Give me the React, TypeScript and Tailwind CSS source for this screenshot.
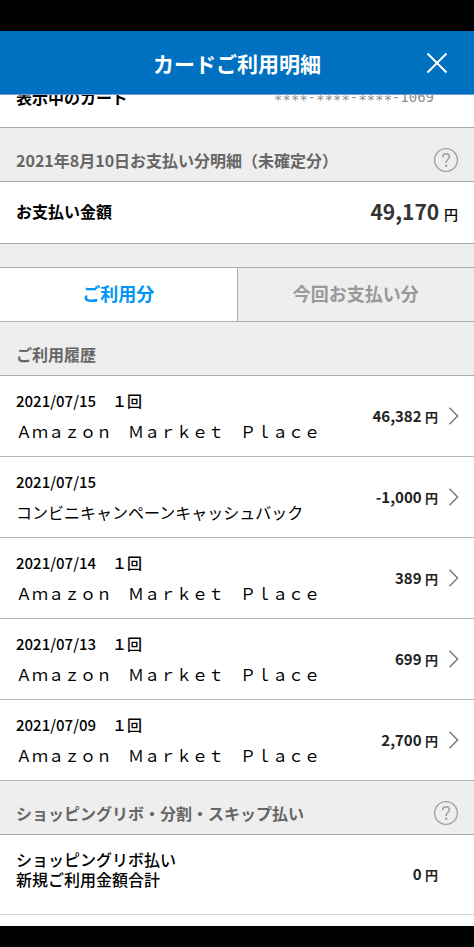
import type { ReactNode } from 'react';

interface Usage {
  date: string;
  count?: string;
  shop: string;
  price: string;
}

const usages: Usage[] = [
  { date: '2021/07/15', count: '１回', shop: 'Ａｍａｚｏｎ　Ｍａｒｋｅｔ　Ｐｌａｃｅ', price: '46,382' },
  { date: '2021/07/15', shop: 'コンビニキャンペーンキャッシュバック', price: '-1,000' },
  { date: '2021/07/14', count: '１回', shop: 'Ａｍａｚｏｎ　Ｍａｒｋｅｔ　Ｐｌａｃｅ', price: '389' },
  { date: '2021/07/13', count: '１回', shop: 'Ａｍａｚｏｎ　Ｍａｒｋｅｔ　Ｐｌａｃｅ', price: '699' },
  { date: '2021/07/09', count: '１回', shop: 'Ａｍａｚｏｎ　Ｍａｒｋｅｔ　Ｐｌａｃｅ', price: '2,700' },
];

const HelpButton = () => (
  <button type="button" aria-label="ヘルプ" className="shrink-0 text-[#a0a0a0]">
    <svg width="26" height="26" viewBox="0 0 26 26" fill="none" stroke="currentColor">
      <circle cx="13" cy="13" r="11.4" strokeWidth="1.3" />
      <path d="M9.7 10.2c0-2.1 1.4-3.4 3.4-3.4s3.3 1.2 3.3 3c0 2.6-3.2 2.8-3.2 5.4v.7" strokeWidth="1.6" />
      <circle cx="13.2" cy="18.7" r="1.2" fill="currentColor" stroke="none" />
    </svg>
  </button>
);

const SectionTitle = ({ children, help }: { children: ReactNode; help?: boolean }) => (
  <div className="flex h-[54px] items-center justify-between border-b border-[#aaaaaa] pt-[10px] pr-[15px] pl-4">
    <h2 className="text-base leading-6 font-bold text-[#666666]">{children}</h2>
    {help && <HelpButton />}
  </div>
);

const Price = ({ value }: { value: string }) => (
  <span className="shrink-0 text-[15px] leading-6 font-bold text-[#222222]">
    {value} <span className="text-[13px]">円</span>
  </span>
);

const UsageItem = ({ date, count, shop, price }: Usage) => (
  <li className="border-b border-[#b4b4b4]">
    <button type="button" className="flex h-20 w-full items-center pr-[15px] pl-4 text-left">
      <span className="flex grow flex-col gap-[6px] leading-6">
        <span className="flex gap-4 text-[15px] leading-6 font-medium">
          <span>{date}</span>
          {count && <span>{count}</span>}
        </span>
        <span className="text-base leading-6">{shop}</span>
      </span>
      <Price value={price} />
      <svg className="ml-[10px] shrink-0" width="11" height="20" viewBox="0 0 11 20" fill="none">
        <path d="M1.5 1.8 9.6 10l-8.1 8.2" stroke="#777777" strokeWidth="1.4" />
      </svg>
    </button>
  </li>
);

const App = () => {
  return (
    <div className="min-h-screen bg-[#eeeeee] font-['Noto_Sans_CJK_JP',sans-serif] text-black">
      <div className="h-[31px] bg-black" />
      <header className="grid h-16 grid-cols-[48px_1fr_48px] items-center border-b border-[#6f9fd4] bg-[#0070c0] px-[13px] text-white">
        <h1 className="col-start-2 text-center text-[21px] leading-8 font-bold">カードご利用明細</h1>
        <button type="button" aria-label="閉じる" className="flex justify-center">
          <svg width="22" height="22" viewBox="0 0 22 22" fill="none" stroke="currentColor" strokeWidth="2">
            <path d="M1.5 1.5l19 19M20.5 1.5l-19 19" />
          </svg>
        </button>
      </header>

      {/* スクロールでヘッダーの下に隠れている行 */}
      <div className="flex h-[33px] items-end justify-between overflow-hidden border-b border-[#aaaaaa] bg-white pr-10 pb-[18px] pl-4">
        <span className="text-base leading-6 font-bold">表示中のカード</span>
        <span className="font-['DejaVu_Sans_Mono',monospace] text-sm leading-6 text-[#8c8c8c]">∗∗∗∗-∗∗∗∗-∗∗∗∗-1069</span>
      </div>

      <SectionTitle help>2021年8月10日お支払い分明細（未確定分）</SectionTitle>
      <div className="flex h-[62px] items-center justify-between border-b border-[#aaaaaa] bg-white px-4 pb-1">
        <span className="text-base leading-6 font-bold">お支払い金額</span>
        <span className="text-[21px] leading-8 font-bold text-[#333333]">
          49,170 <span className="text-sm font-medium text-black">円</span>
        </span>
      </div>

      <div role="tablist" className="mt-[23px] flex h-[55px] border-y border-[#b0b0b0] text-lg font-bold">
        <button type="button" role="tab" aria-selected="true" className="flex-1 bg-white pb-1 text-[#0095f6]">
          ご利用分
        </button>
        <button type="button" role="tab" aria-selected="false" className="flex-1 border-l border-[#b0b0b0] pb-1 text-[#999999]">
          今回お支払い分
        </button>
      </div>

      <SectionTitle>ご利用履歴</SectionTitle>
      <ul className="bg-white">
        {usages.map((usage) => (
          <UsageItem key={usage.date + usage.price} {...usage} />
        ))}
      </ul>

      <SectionTitle help>ショッピングリボ・分割・スキップ払い</SectionTitle>
      <div className="bg-white pb-[11px]">
        <div className="flex h-20 items-center justify-between border-b border-[#d4d4d4] pr-9 pl-4">
          <p className="pb-3 text-base leading-5 font-medium">
            ショッピングリボ払い
            <br />
            新規ご利用金額合計
          </p>
          <Price value="0" />
        </div>
      </div>
      <div className="h-[21px] bg-black" />
    </div>
  );
};

export default App;
